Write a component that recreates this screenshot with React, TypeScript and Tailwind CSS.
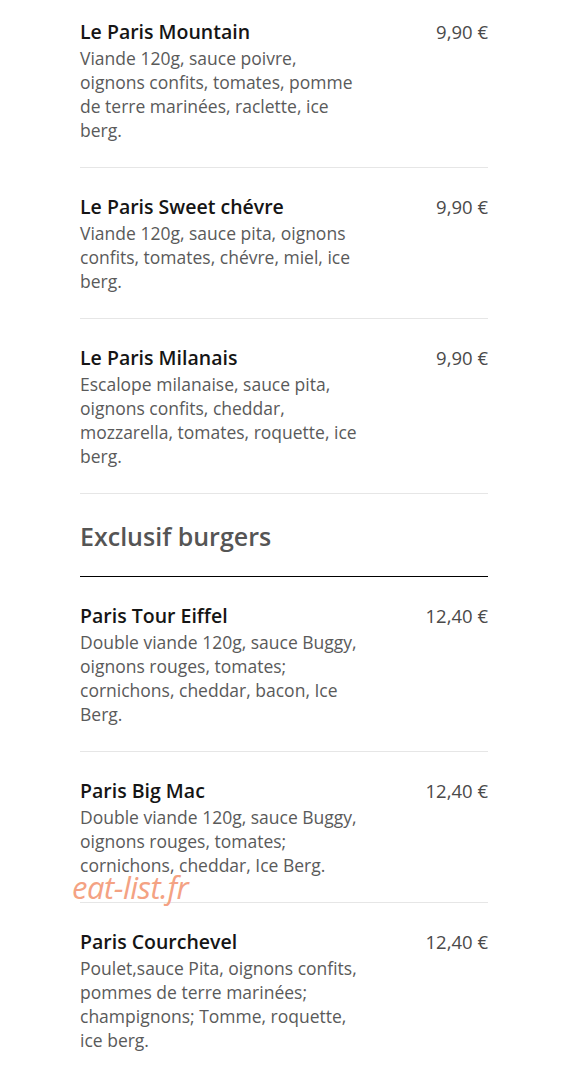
import React from "react";

type Item = { name: string; desc: string; price: string };

const group1: Item[] = [
  { name: "Le Paris Mountain", desc: "Viande 120g, sauce poivre, oignons confits, tomates, pomme de terre marinées, raclette, ice berg.", price: "9,90 €" },
  { name: "Le Paris Sweet chévre", desc: "Viande 120g, sauce pita, oignons confits, tomates, chévre, miel, ice berg.", price: "9,90 €" },
  { name: "Le Paris Milanais", desc: "Escalope milanaise, sauce pita, oignons confits, cheddar, mozzarella, tomates, roquette, ice berg.", price: "9,90 €" },
];

const group2: Item[] = [
  { name: "Paris Tour Eiffel", desc: "Double viande 120g, sauce Buggy, oignons rouges, tomates; cornichons, cheddar, bacon, Ice Berg.", price: "12,40 €" },
  { name: "Paris Big Mac", desc: "Double viande 120g, sauce Buggy, oignons rouges, tomates; cornichons, cheddar, Ice Berg.", price: "12,40 €" },
  { name: "Paris Courchevel", desc: "Poulet,sauce Pita, oignons confits, pommes de terre marinées; champignons; Tomme, roquette, ice berg.", price: "12,40 €" },
];

function Row({ item, first, last }: { item: Item; first?: boolean; last?: boolean }) {
  return (
    <div className={`flex justify-between ${first ? "pt-[18px]" : "pt-[25px]"} pb-[25px] ${last ? "" : "border-b border-[#e6e6e6]"}`}>
      <div className="w-[281px]">
        <div className="text-[19.5px] leading-[28px] font-semibold text-[#151515]">{item.name}</div>
        <div className="text-[17.5px] leading-[24px] text-[#5a5a5a]">{item.desc}</div>
      </div>
      <div className="text-[18.5px] leading-[28px] font-medium text-[#4a4a4a]">{item.price}</div>
    </div>
  );
}

export default function App() {
  return (
    <div className="relative w-[564px] min-h-[1076px] bg-white" style={{ fontFamily: '"Open Sans", sans-serif' }}>
      <div className="ml-[80px] w-[408px]">
        {group1.map((it, i) => (
          <Row key={it.name} item={it} first={i === 0} />
        ))}
        <div className="pt-[26px] pb-[24px] border-b border-black">
          <h2 className="text-[25px] leading-[32px] font-semibold text-[#555]">Exclusif burgers</h2>
        </div>
        {group2.map((it, i) => (
          <Row key={it.name} item={it} last={i === group2.length - 1} />
        ))}
      </div>
      <div className="absolute left-[72px] top-[872px] text-[31px] leading-[31px] italic font-normal text-[#f4a283] tracking-[-0.5px]">
        eat-list.fr
      </div>
    </div>
  );
}
